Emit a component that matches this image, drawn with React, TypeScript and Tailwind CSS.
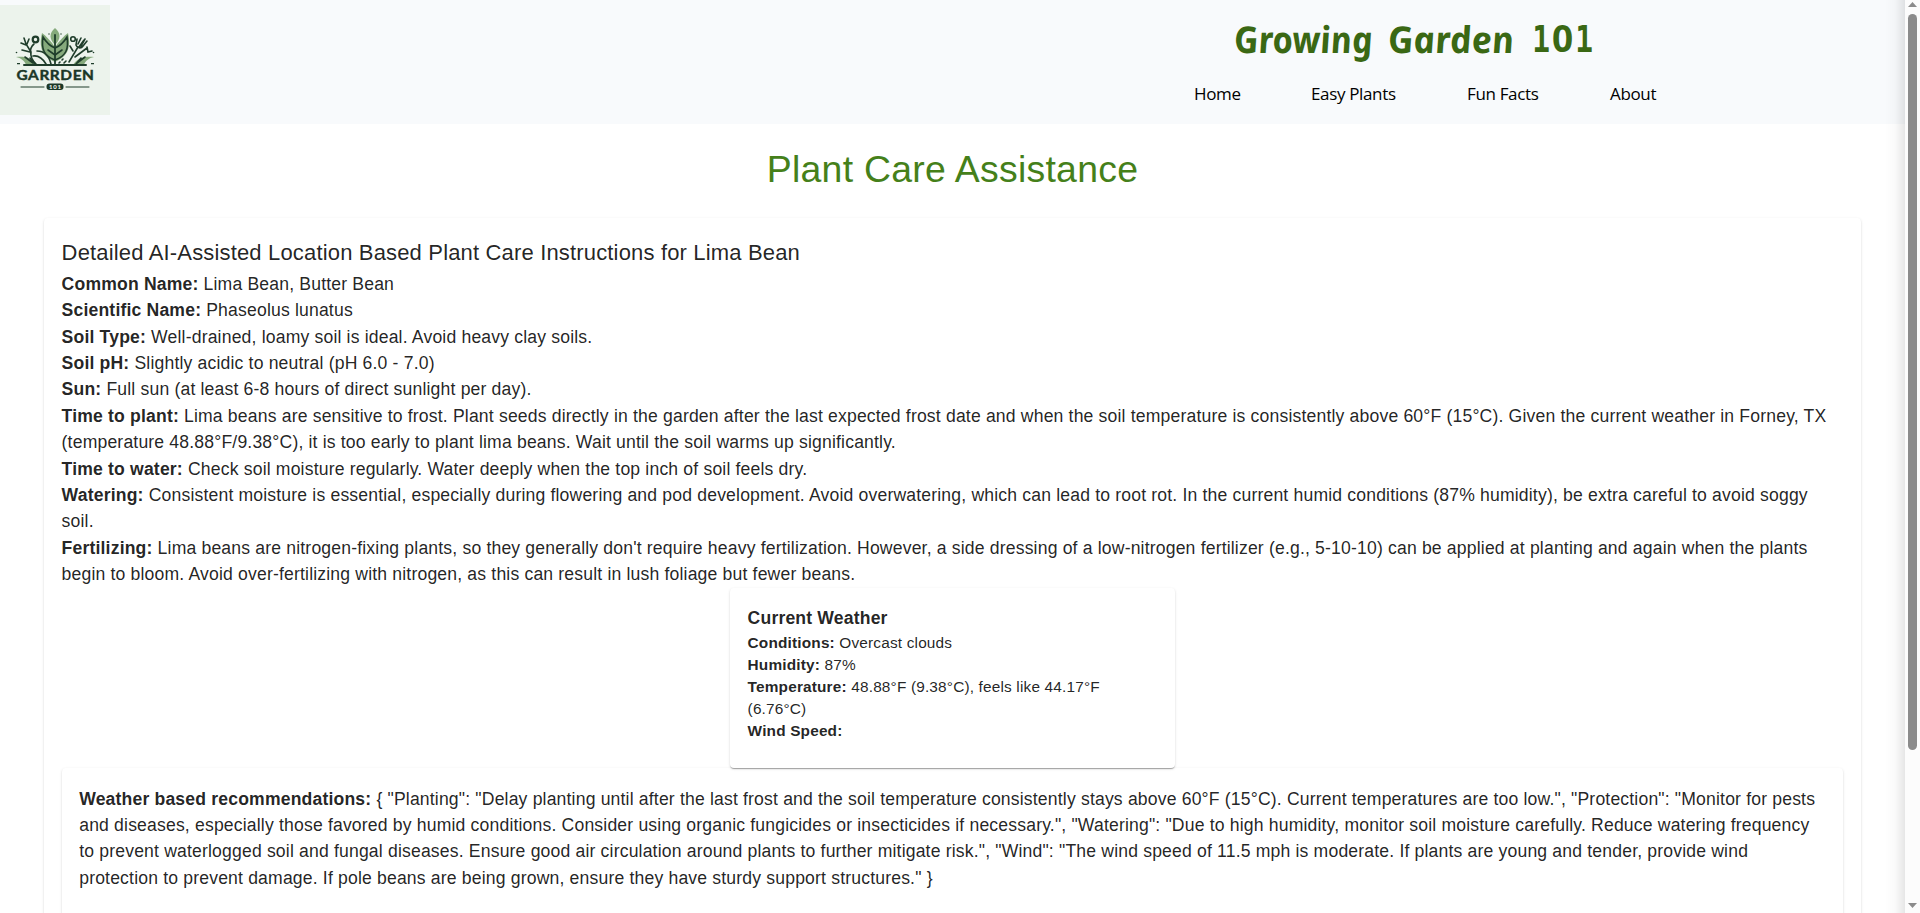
import React from "react";

const cardShadow =
  "shadow-[0_2px_1px_-1px_rgba(0,0,0,0.2),0_1px_1px_0_rgba(0,0,0,0.14),0_1px_3px_0_rgba(0,0,0,0.12)]";

const details: [string, string][] = [
  ["Common Name:", "Lima Bean, Butter Bean"],
  ["Scientific Name:", "Phaseolus lunatus"],
  ["Soil Type:", "Well-drained, loamy soil is ideal. Avoid heavy clay soils."],
  ["Soil pH:", "Slightly acidic to neutral (pH 6.0 - 7.0)"],
  ["Sun:", "Full sun (at least 6-8 hours of direct sunlight per day)."],
  [
    "Time to plant:",
    "Lima beans are sensitive to frost. Plant seeds directly in the garden after the last expected frost date and when the soil temperature is consistently above 60°F (15°C). Given the current weather in Forney, TX (temperature 48.88°F/9.38°C), it is too early to plant lima beans. Wait until the soil warms up significantly.",
  ],
  ["Time to water:", "Check soil moisture regularly. Water deeply when the top inch of soil feels dry."],
  [
    "Watering:",
    "Consistent moisture is essential, especially during flowering and pod development. Avoid overwatering, which can lead to root rot. In the current humid conditions (87% humidity), be extra careful to avoid soggy soil.",
  ],
  [
    "Fertilizing:",
    "Lima beans are nitrogen-fixing plants, so they generally don't require heavy fertilization. However, a side dressing of a low-nitrogen fertilizer (e.g., 5-10-10) can be applied at planting and again when the plants begin to bloom. Avoid over-fertilizing with nitrogen, as this can result in lush foliage but fewer beans.",
  ],
];

const weather: [string, string][] = [
  ["Conditions:", "Overcast clouds"],
  ["Humidity:", "87%"],
  ["Temperature:", "48.88°F (9.38°C), feels like 44.17°F (6.76°C)"],
  ["Wind Speed:", ""],
];

const recommendations =
  '{ "Planting": "Delay planting until after the last frost and the soil temperature consistently stays above 60°F (15°C). Current temperatures are too low.", "Protection": "Monitor for pests and diseases, especially those favored by humid conditions. Consider using organic fungicides or insecticides if necessary.", "Watering": "Due to high humidity, monitor soil moisture carefully. Reduce watering frequency to prevent waterlogged soil and fungal diseases. Ensure good air circulation around plants to further mitigate risk.", "Wind": "The wind speed of 11.5 mph is moderate. If plants are young and tender, provide wind protection to prevent damage. If pole beans are being grown, ensure they have sturdy support structures." }';

function Logo() {
  return (
    <svg viewBox="0 0 110 110" className="h-[110px] w-[110px] shrink-0" fill="none" strokeLinecap="round">
      <rect width="110" height="110" fill="#ecf3ec" />
      <g fill="#86aa7c">
        <path d="M55 23c6 5 6 11 0 17c-6-6-6-12 0-17z" />
        <path d="M42 28c4 3 9 8 13 14c4-6 9-11 13-14c3 13 1 23-13 29c-14-6-16-16-13-29z" />
        <path d="M16 52c9-1 17 1 21 8H26c-1-4-5-7-10-8z" />
        <path d="M94 52c-9-1-17 1-21 8h11c1-4 5-7 10-8z" />
      </g>
      <g stroke="#1f3d2b" strokeWidth="1.6">
        <path d="M55 30v30" strokeWidth="1.800" />
        <path d="M55 43c-5-2-9-6-12-11c-2 12 1 19 12 23M55 43c5-2 9-6 12-11c2 12-1 19-12 23M55 50l-7-5M55 50l7-5" />
        <path d="M24 60h62" strokeWidth="2" />
        <path d="M24 33l2 6l5 8c-1 5 1 8 5 12M26 40l-5-2M30 47l-8-2M34 39c-4 3-4 7-3 11M27 39l2-5" />
        <circle cx="35.500" cy="34.500" r="2.800" strokeWidth="2.200" />
        <path d="M37 46c7 0 12 5 14 13M33 51c6-1 10 3 13 8M25 52l8 6M30 53l5 6" />
        <path d="M69 57l9-15M77 34l-1 6c1 3 5 4 7 1l4-5M81 33l-3 6M85 34l-4 7M79 42l5-7" />
        <circle cx="73" cy="34" r="2.300" />
        <path d="M70 41l3 5M75 52l12-9M87 42l1 5l4-1M85 52l-8 6M81 53l-5 6" />
        <path d="M59 58l1-1M62 55l1-1M64 58l2-2" />
      </g>
      <g fill="#1f3d2b">
        <circle cx="16.500" cy="47.500" r="0.800" />
        <circle cx="93.500" cy="47.500" r="0.800" />
        <circle cx="49" cy="29" r="0.700" />
        <circle cx="61" cy="29" r="0.700" />
        <path d="M17 58h3v1.200h-3zM91 58h3v1.200h-3z" />
      </g>
      <text
        x="55.500"
        y="75"
        textAnchor="middle"
        textLength="78"
        lengthAdjust="spacingAndGlyphs"
        className="fill-[#1b3727] stroke-[#1b3727] stroke-[0.4px] font-['Lato',sans-serif] text-[13px] font-bold tracking-[0.5px]"
      >
        GARRDEN
      </text>
      <path d="M21 82h23M66 82h23" stroke="#1f3d2b" strokeWidth="1" />
      <rect x="46.500" y="78.500" width="17" height="6.500" rx="3" fill="#1b3727" />
      <text
        x="55"
        y="84"
        textAnchor="middle"
        textLength="12"
        className="fill-[#ecf3ec] font-['Lato',sans-serif] text-[6px] font-black"
      >
        101
      </text>
    </svg>
  );
}

function One() {
  return (
    <span className="inline-block w-[18px] text-center font-['DejaVu_Sans_Mono',monospace] text-[37px] font-bold">
      <span className="-mx-2 inline-block scale-x-[0.8]">1</span>
    </span>
  );
}

export default function App() {
  return (
    <div className="flex h-[913px] w-full overflow-hidden bg-white font-['Liberation_Sans',Arial,sans-serif] text-[17.6px] leading-[26.4px] text-[rgba(0,0,0,0.87)]">
      <div className="relative h-full min-w-0 flex-1 overflow-hidden">
        <header className="flex h-[124px] items-start bg-[#f8fafc] pt-[5px]">
          <Logo />
          <div className="ml-[1084px] shrink-0">
            <h1 className="ml-[42px] flex h-[69px] w-[364px] items-center pb-[2px] font-['Noto_Sans',sans-serif] text-[37px] font-bold leading-none whitespace-nowrap text-[#3a6814]">
              <span className="w-[154px] italic">
                <span className="inline-block origin-bottom-left scale-x-[0.95] skew-x-[8deg]">Growing</span>
              </span>
              <span className="w-[142px] italic">
                <span className="inline-block origin-bottom-left scale-x-[0.99] skew-x-[8deg]">Garden</span>
              </span>
              <span>
                <One />
                <span className="inline-block w-[25px] text-center">0</span>
                <One />
              </span>
            </h1>
            <nav className="flex gap-[70px] font-['Open_Sans',sans-serif] text-[17px] leading-[40px] tracking-[-0.35px] text-black">
              <a className="w-[47px] whitespace-nowrap">Home</a>
              <a className="w-[86px] whitespace-nowrap">Easy Plants</a>
              <a className="w-[73px] whitespace-nowrap">Fun Facts</a>
              <a className="w-[48px] whitespace-nowrap">About</a>
            </nav>
          </div>
        </header>

        <main className="px-[44px] pt-[22px]">
          <h2 className="mb-[25.7px] text-center text-[37.4px] leading-[46.2px] tracking-[0.00735em] text-[#45801a]">
            Plant Care Assistance
          </h2>
          <section className={`rounded bg-white p-[17.6px] ${cardShadow}`}>
            <h3 className="pt-px text-[22px] leading-[34.2px] tracking-[0.0075em]">
              Detailed AI-Assisted Location Based Plant Care Instructions for Lima Bean
            </h3>
            {details.map(([label, text]) => (
              <p key={label} className="tracking-[0.0095em]">
                <strong>{label}</strong> {text}
              </p>
            ))}
            <div
              className={`relative z-10 mx-auto w-[445px] rounded bg-white px-[17.6px] pt-[17.6px] pb-[26.4px] ${cardShadow}`}
            >
              <h4 className="font-bold tracking-[0.00938em]">Current Weather</h4>
              {weather.map(([label, text]) => (
                <p key={label} className="text-[15.4px] leading-[22.02px] tracking-[0.01071em]">
                  <strong>{label}</strong> {text}
                </p>
              ))}
            </div>
            <div className={`rounded bg-white p-[17.6px] pb-[60px] ${cardShadow}`}>
              <p className="tracking-[0.0095em]">
                <strong>Weather based recommendations:</strong> {recommendations}
              </p>
            </div>
          </section>
        </main>
        <div className="absolute inset-y-0 right-0 w-[20px] bg-gradient-to-r from-transparent via-black/2 to-black/10" />
      </div>

      <div className="flex w-[15px] shrink-0 flex-col items-center justify-between bg-[#fcfcfc] pt-[2px] pb-[5px]">
        <svg width="9" height="5" viewBox="0 0 9 5" className="fill-[#8b8b8b]">
          <path d="M4.500 0L9 5H0z" />
        </svg>
        <div className="mt-[7px] mb-auto h-[736px] w-[9px] rounded-full bg-[#8b8b8b]" />
        <svg width="9" height="5" viewBox="0 0 9 5" className="fill-[#8b8b8b]">
          <path d="M0 0h9L4.500 5z" />
        </svg>
      </div>
    </div>
  );
}
